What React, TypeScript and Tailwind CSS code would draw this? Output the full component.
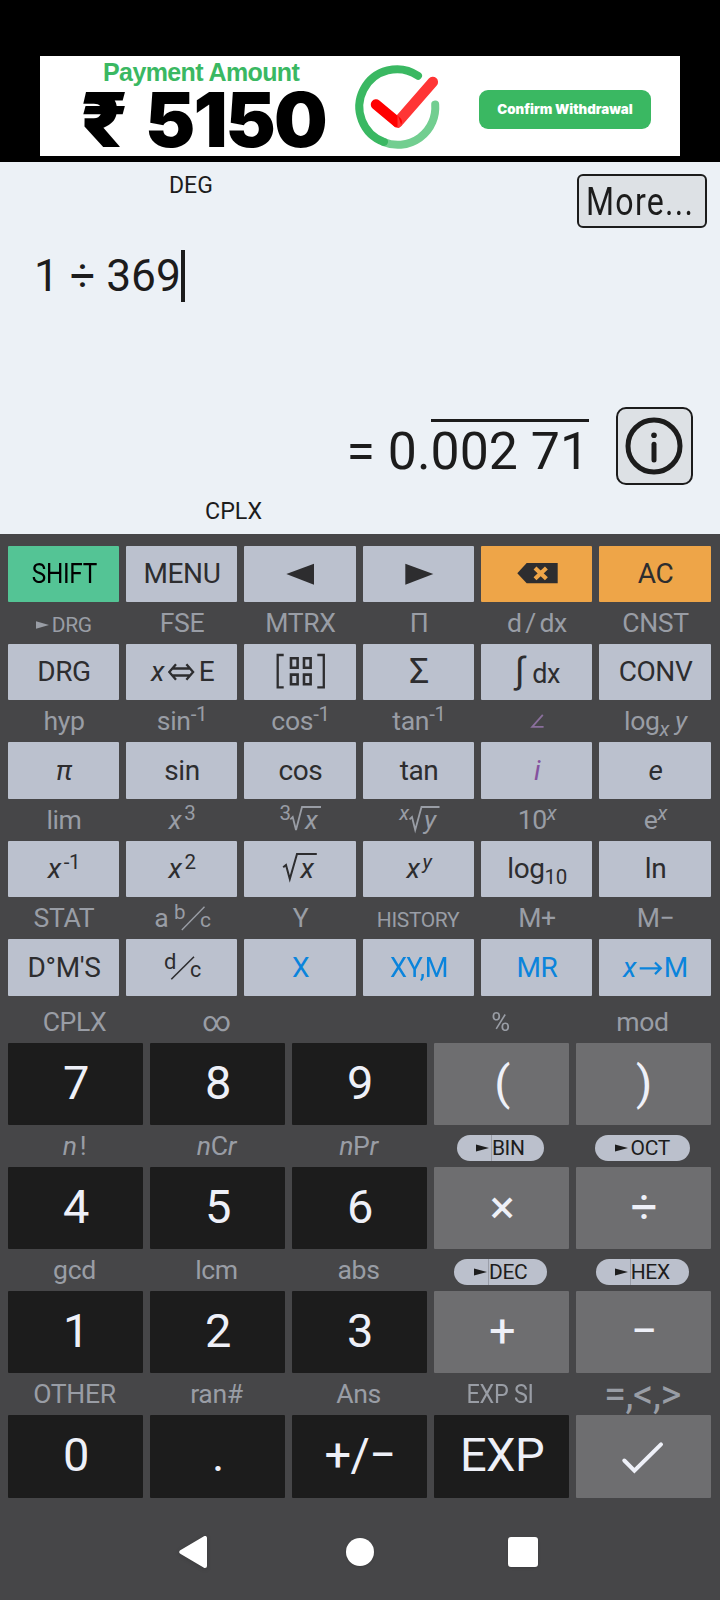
import type { ReactNode } from "react";

const mainFont = "font-['Roboto','Noto_Sans',sans-serif]";

function Sup({ children }: { children: ReactNode }) {
  return <span className="align-[9px] text-[20.5px] leading-none">{children}</span>;
}

function Sub({ children }: { children: ReactNode }) {
  return <span className="align-[-6px] text-[20.5px] leading-none">{children}</span>;
}

function Pointer() {
  return (
    <svg className="inline-block align-[3px]" width="13" height="8" viewBox="0 0 13 8" fill="currentColor">
      <path d="M0 0.3L13 4L0 7.7Z" />
    </svg>
  );
}

function KeyArt({ children }: { children: ReactNode }) {
  return (
    <svg className="mx-auto block" width="111" height="56" viewBox="0 0 111 56" fill="none" stroke="currentColor" strokeWidth="2">
      {children}
    </svg>
  );
}

function LabelArt({ children }: { children: ReactNode }) {
  return (
    <svg className="mx-auto block" width="111" height="42" viewBox="0 0 111 42" fill="none" stroke="currentColor" strokeWidth="1.8">
      {children}
    </svg>
  );
}

function T({ x, y, size = 28, italic, children }: { x: number; y: number; size?: number; italic?: boolean; children: string }) {
  return (
    <text x={x} y={y} fontSize={size} fontStyle={italic ? "italic" : "normal"} fill="currentColor" stroke="none">
      {children}
    </text>
  );
}

function Pill({ name, divider = true, width }: { name: string; divider?: boolean; width: string }) {
  return (
    <span className={`mt-2.5 inline-flex h-[26px] items-center justify-center rounded-full bg-[#bbc0cc] align-top text-[21px] leading-[26px] text-[#1d1d1d] ${width}`}>
      <svg width="13" height="8" viewBox="0 0 13 8" fill="currentColor">
        <path d="M0 0.5L13 4L0 7.5Z" />
      </svg>
      <span className={`ml-[1.5px] h-full border-l ${divider ? "border-[#9a9ea9]" : "border-transparent"}`}>{name}</span>
    </span>
  );
}

type Key = { face: ReactNode; style?: string };

const light = "bg-[#bbc1ce] text-[#2d2d2f]";
const blue = "bg-[#bbc1ce] text-[#0a84dc]";
const orange = "bg-[#eea548] text-[#2d2d2f]";
const dark = "bg-[#1c1c1c] text-[#eef0f8]";
const gray = "bg-[#6e6e70] text-[#eef0f8]";

const functionRows: { height: string; labels?: ReactNode[]; keys: Key[] }[] = [
  {
    height: "h-14 leading-[56px]",
    keys: [
      { face: <span className="inline-block scale-x-[0.87]">SHIFT</span>, style: "bg-[#54c495] text-black" },
      { face: "MENU" },
      { face: <KeyArt><path d="M41.3 28L69 17.7V38.7Z" fill="currentColor" stroke="none" /></KeyArt> },
      { face: <KeyArt><path d="M69.3 28L41.3 17.7V38.7Z" fill="currentColor" stroke="none" /></KeyArt> },
      {
        face: (
          <KeyArt>
            <path d="M35.3 27.3L44.7 17H75.7V37.3H44.7Z" fill="currentColor" stroke="none" />
            <path d="M53 21.9L64.4 32.7M64.4 21.9L53 32.7" stroke="#eea548" strokeWidth="4.2" />
          </KeyArt>
        ),
        style: orange,
      },
      { face: "AC", style: orange },
    ],
  },
  {
    height: "h-14 leading-[56px]",
    labels: [
      <><Pointer /><span className="ml-[2.5px] text-[21px] leading-none">DRG</span></>,
      "FSE",
      "MTRX",
      "Π",
      <>d<span className="mx-[3.5px]">/</span>dx</>,
      "CNST",
    ],
    keys: [
      { face: "DRG" },
      {
        face: (
          <KeyArt>
            <T x={24} y={37} italic>x</T>
            <path d="M45 24.5H63.4M45 31.5H63.4M49 20.3L42.3 28L49 35.7M59.4 20.3L66.1 28L59.4 35.7" strokeWidth="2.3" />
            <T x={71.8} y={37}>E</T>
          </KeyArt>
        ),
      },
      {
        face: (
          <KeyArt>
            <path d="M38.7 11H32.7V43.4H38.7M72.3 11H78.8V43.4H72.3" strokeWidth="2.3" />
            <path d="M46 14.3H52.6V23.7H46ZM59 14.3H65.6V23.7H59ZM46 30.6H52.6V40.3H46ZM59 30.6H65.6V40.3H59Z" strokeWidth="2.6" />
          </KeyArt>
        ),
      },
      { face: <span className="align-[-2px] text-[35px] leading-none">Σ</span> },
      {
        face: (
          <KeyArt>
            <T x={33} y={39.2} size={36}>∫</T>
            <T x={50.2} y={38.7} size={27}>dx</T>
          </KeyArt>
        ),
      },
      { face: "CONV" },
    ],
  },
  {
    height: "h-[57px] leading-[57px]",
    labels: [
      "hyp",
      <>sin<Sup>-1</Sup></>,
      <>cos<Sup>-1</Sup></>,
      <>tan<Sup>-1</Sup></>,
      <span className="text-[#8a6f9c]"><LabelArt><path d="M60.8 14.8L50.2 26.9H61.6" /></LabelArt></span>,
      <>log<Sub><i>x</i></Sub><i className="ml-1.5">y</i></>,
    ],
    keys: [
      { face: <i>π</i> },
      { face: "sin" },
      { face: "cos" },
      { face: "tan" },
      { face: <i>i</i>, style: "bg-[#bbc1ce] text-[#84529f]" },
      { face: <i>e</i> },
    ],
  },
  {
    height: "h-14 leading-[56px]",
    labels: [
      "lim",
      <><i className="mr-[3px]">x</i><Sup>3</Sup></>,
      <LabelArt>
        <T x={34.5} y={21} size={20.5}>3</T>
        <path d="M45.3 20.3L47.7 18L51 31L57 8H76" />
        <T x={60} y={30} size={26.6} italic>x</T>
      </LabelArt>,
      <LabelArt>
        <T x={35.3} y={21} size={20.5} italic>x</T>
        <path d="M45.5 20.3L48 18L51.2 31L57.5 8H75.5" />
        <T x={60} y={30} size={26.6} italic>y</T>
      </LabelArt>,
      <>10<Sup><i>x</i></Sup></>,
      <>e<Sup><i>x</i></Sup></>,
    ],
    keys: [
      { face: <><i className="mr-[3px]">x</i><Sup>-1</Sup></> },
      { face: <><i className="mr-[3px]">x</i><Sup>2</Sup></> },
      {
        face: (
          <KeyArt>
            <path d="M38.2 26.3L41 24L44.8 38L52 13H71.8" />
            <T x={55.5} y={37} italic>x</T>
          </KeyArt>
        ),
      },
      { face: <><i className="mr-[3px]">x</i><Sup><i>y</i></Sup></> },
      { face: <>log<Sub>10</Sub></> },
      { face: "ln" },
    ],
  },
  {
    height: "h-[57px] leading-[57px]",
    labels: [
      "STAT",
      <LabelArt>
        <T x={27.2} y={30} size={26.6}>a</T>
        <T x={47} y={22} size={20.5}>b</T>
        <path d="M54.8 33L77.5 9.7" strokeWidth="1.4" />
        <T x={73} y={30} size={21}>c</T>
      </LabelArt>,
      "Y",
      <span className="pr-[2px] text-[21px] leading-none">HISTORY</span>,
      "M+",
      "M−",
    ],
    keys: [
      { face: "D°M'S" },
      {
        face: (
          <KeyArt>
            <T x={37} y={30} size={22}>d</T>
            <path d="M44.3 40.3L67 17.7" strokeWidth="1.6" />
            <T x={63} y={37.7} size={21.5}>c</T>
          </KeyArt>
        ),
      },
      { face: "X", style: blue },
      { face: <span className="inline-block scale-x-[0.97] pr-px">XY,M</span>, style: blue },
      { face: "MR", style: blue },
      {
        face: (
          <KeyArt>
            <T x={23} y={38} italic>x</T>
            <path d="M39.7 29.3H60.6M55 23.5L60.8 29.3L55 35.1" strokeWidth="2.2" />
            <T x={63.8} y={38}>M</T>
          </KeyArt>
        ),
        style: blue,
      },
    ],
  },
];

const numberRows: { height: string; labels: ReactNode[]; keys: Key[] }[] = [
  {
    height: "h-[82px]",
    labels: ["CPLX", <span className="text-[28px] leading-none">∞</span>, "", <span className="inline-block scale-x-[0.97]">%</span>, "mod"],
    keys: [{ face: "7" }, { face: "8" }, { face: "9" }, { face: "(", style: gray }, { face: ")", style: gray }],
  },
  {
    height: "h-[82px]",
    labels: [
      <><i className="mr-[3px]">n</i>!</>,
      <><i>n</i>C<i>r</i></>,
      <><i>n</i>P<i>r</i></>,
      <Pill name="BIN" width="w-[87px]" />,
      <Pill name="OCT" divider={false} width="w-[95px]" />,
    ],
    keys: [{ face: "4" }, { face: "5" }, { face: "6" }, { face: "×", style: gray }, { face: "÷", style: gray }],
  },
  {
    height: "h-[82px]",
    labels: ["gcd", "lcm", "abs", <Pill name="DEC" width="w-[93px]" />, <Pill name="HEX" width="w-[93px]" />],
    keys: [{ face: "1" }, { face: "2" }, { face: "3" }, { face: "+", style: gray }, { face: "−", style: gray }],
  },
  {
    height: "h-[83px]",
    labels: [
      "OTHER",
      "ran#",
      "Ans",
      <span className="inline-block scale-x-[0.88]">EXP SI</span>,
      <span className="align-[-4.5px] text-[40px] leading-none">=,&lt;,&gt;</span>,
    ],
    keys: [
      { face: "0" },
      { face: "." },
      { face: "+/−" },
      { face: "EXP" },
      {
        face: (
          <svg className="block" width="133" height="83" viewBox="1 0 133 83" fill="none" stroke="currentColor" strokeWidth="4" strokeLinecap="round">
            <path d="M48.3 45.5L58.4 55.6L85 29.3" />
          </svg>
        ),
        style: gray,
      },
    ],
  },
];

function AdBanner() {
  return (
    <header className="h-[162px] bg-black px-10 pt-14">
      <div className="flex h-[100px] bg-white">
        <div className="w-[316px]">
          <div className="ml-[63px] h-[30px] pt-[3px] font-['Liberation_Sans',Arial,sans-serif] text-[25px] leading-[27px] font-bold tracking-[-0.6px] whitespace-nowrap text-[#3ab862]">
            Payment Amount
          </div>
          <div className="flex h-[70px] font-['Inter',sans-serif] text-[75.5px] leading-[67px] font-black whitespace-nowrap text-black">
            <span className="ml-[40px] w-[65px] origin-left scale-x-[1.07]">₹</span>
            <span className="tracking-[-1.9px]">5150</span>
          </div>
        </div>
        <svg className="overflow-visible" width="84" height="100" viewBox="355.5 56 84 100" fill="none" strokeWidth="8" strokeLinecap="round">
          <path d="M434.7 104.5A37.5 37.5 0 0 1 383 142" stroke="#72ce90" />
          <path d="M417.5 75.8A37.5 37.5 0 1 0 383.5 142" stroke="#3ab862" />
          <path d="M397 122.5L432.3 82" stroke="#ff3535" strokeWidth="10.5" />
          <path d="M375.5 104.5L396.2 121.8" stroke="#ff0000" strokeWidth="10.5" />
          <path d="M397 114.5L401 125.5L398.3 128H397Z" fill="#ff3535" stroke="none" />
        </svg>
        <div className="mt-[34px] ml-[39px] h-[39px] w-[172px] rounded-[9px] bg-[#3ab862] text-center font-['Inter',sans-serif] text-[13.3px] leading-[39px] font-black whitespace-nowrap text-white">
          Confirm Withdrawal
        </div>
      </div>
    </header>
  );
}

function Display() {
  return (
    <section className="flex h-[372px] flex-col bg-[#ecf1f6] text-[#1c1c1c]">
      <div className="flex h-[68px] justify-between pr-[13px] pl-[169px]">
        <span className="mt-3 text-[23px] leading-[23px]">DEG</span>
        <div className="mt-3 h-[54px] w-[130px] rounded-md border-2 border-[#1c1c1c] bg-[#dde1e5] pl-[6.5px]">
          <span className="inline-block origin-left scale-x-[0.845] text-[38px] leading-[52px] tracking-[1.5px]">More...</span>
        </div>
      </div>
      <div className="mt-5 flex h-[52px] pl-[34px] text-[44.3px] leading-[52px]">
        <span className="whitespace-pre">1 ÷ 369</span>
        <span className="h-[52px] w-1 bg-[#1c1c1c]" />
      </div>
      <div className="mt-[105px] flex h-[78px] justify-end pr-[27px]">
        <div className="pt-[12px] text-[51.8px] leading-[66px] whitespace-nowrap">
          = 0.<span className="inline-block h-[66px] border-t-[3px] border-[#1c1c1c] align-top leading-[60px]">002 71</span>
        </div>
        <div className="ml-[27px] flex h-[78px] w-[77px] items-center justify-center rounded-[10px] border-2 border-[#1c1c1c] bg-[#dde1e5]">
          <svg className="mr-px" width="58" height="58" viewBox="0 0 58 58" fill="none" stroke="currentColor" strokeWidth="5">
            <circle cx="29" cy="29" r="26" />
            <path d="M29 27.2V43" strokeLinecap="round" />
            <circle cx="29" cy="18.3" r="2.8" fill="currentColor" stroke="none" />
          </svg>
        </div>
      </div>
      <div className="mt-[14px] pl-[205px] text-[23.3px] leading-[24px]">CPLX</div>
    </section>
  );
}

function Keypad() {
  return (
    <main className="px-2 pt-3 pr-[9px]">
      {functionRows.map((row, r) => (
        <div key={r}>
          {row.labels && (
            <div className="grid h-[42px] grid-cols-[111px_111px_112px_111px_111px_112px] gap-x-[7px] text-center text-[26.6px] leading-[42px] tracking-[-0.35px] whitespace-nowrap text-[#999da5]">
              {row.labels.map((label, i) => (
                <div key={i} className="h-[42px] pl-px">{label}</div>
              ))}
            </div>
          )}
          <div className={`grid grid-cols-[111px_111px_112px_111px_111px_112px] gap-x-[7px] text-center text-[28px] tracking-[-0.4px] whitespace-nowrap ${row.height}`}>
            {row.keys.map((k, i) => (
              <div key={i} className={`h-full overflow-hidden rounded-[1px] pl-px ${k.style ?? light}`}>{k.face}</div>
            ))}
          </div>
        </div>
      ))}
      <div className="h-[5px]" />
      {numberRows.map((row, r) => (
        <div key={r}>
          <div className="grid h-[42px] grid-cols-5 gap-x-[7px] text-center text-[26.6px] leading-[42px] tracking-[-0.35px] whitespace-nowrap text-[#999da5]">
            {row.labels.map((label, i) => (
              <div key={i} className="h-[42px] pr-[2px]">{label}</div>
            ))}
          </div>
          <div className={`grid grid-cols-5 gap-x-[7px] text-center text-[47px] leading-[80px] tracking-[-0.6px] whitespace-nowrap ${row.height}`}>
            {row.keys.map((k, i) => (
              <div key={i} className={`h-full overflow-hidden rounded-[1px] pl-px ${k.style ?? dark}`}>{k.face}</div>
            ))}
          </div>
        </div>
      ))}
    </main>
  );
}

function NavBar() {
  return (
    <nav className="flex h-[102px] items-center pt-1.5 pl-[179px]">
      <svg className="drop-shadow-sm" width="28" height="34" viewBox="0 0 28 34" fill="white" stroke="white" strokeWidth="4" strokeLinejoin="round">
        <path d="M2.3 17L26 3V31Z" />
      </svg>
      <span className="ml-[139px] size-7 rounded-full bg-white shadow-sm" />
      <span className="ml-[134px] size-[30px] rounded-[3px] bg-white shadow-sm" />
    </nav>
  );
}

export default function App() {
  return (
    <div className={`h-[1600px] w-[720px] overflow-hidden bg-[#464648] ${mainFont}`}>
      <AdBanner />
      <Display />
      <Keypad />
      <NavBar />
    </div>
  );
}
